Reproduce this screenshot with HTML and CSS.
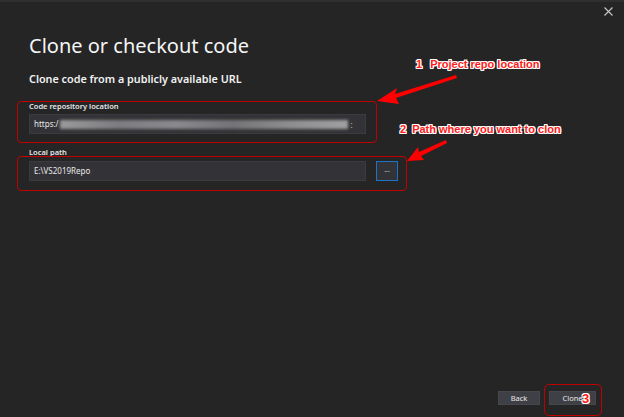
FILE: index.html
```html
<!DOCTYPE html>
<html>
<head>
<meta charset="utf-8">
<link rel="stylesheet" href="styles.css">
</head>
<body>
<div class="dialog">
  <div class="topbar">
    <svg class="close" width="9" height="9" viewBox="0 0 9 9"><path d="M0.5 0.5L8.5 8.5M8.5 0.5L0.5 8.5" stroke="#c8c8c8" stroke-width="1.1"/></svg>
  </div>
  <main class="content">
    <h1 class="title">Clone or checkout code</h1>
    <h2 class="subtitle">Clone code from a publicly available URL</h2>
    <div class="field field-repo">
      <label class="label">Code repository location</label>
      <div class="input"><span class="value">https:/</span><span class="blur"></span><span class="blur-tail">:</span></div>
    </div>
    <div class="field field-path">
      <label class="label">Local path</label>
      <div class="row">
        <div class="input"><span class="value">E:\VS2019Repo</span></div>
        <button class="browse">...</button>
      </div>
    </div>
  </main>
  <footer class="footer">
    <button class="btn">Back</button>
    <button class="btn">Clone</button>
  </footer>

  <div class="annot box1"></div>
  <div class="annot box2"></div>
  <div class="annot box3"></div>
  <svg class="arrows" width="624" height="417" viewBox="0 0 624 417">
    <polygon points="377,101 397,88 395,94 456,75 457,78 396,98 399,104" fill="#ff0000"/>
    <polygon points="407,161 418,147 419,152 446,140 447,143 421,156 424,160" fill="#ff0000"/>
  </svg>
  <div class="note note1"><span class="num">1</span>Project repo location</div>
  <div class="note note2"><span class="num">2</span>Path where you want to clon</div>
  <div class="note note3">3</div>
</div>
</body>
</html>
```
FILE: styles.css
```css
* { box-sizing: border-box; }
html, body { margin: 0; padding: 0; }
body {
  width: 624px;
  height: 417px;
  background: #252526;
  font-family: "Noto Sans", "Open Sans", sans-serif;
  color: #f1f1f1;
  overflow: hidden;
}
.dialog {
  position: relative;
  width: 624px;
  height: 417px;
  border-top: 2px solid #2f2f31;
  display: flex;
  flex-direction: column;
}
.topbar {
  height: 20px;
  display: flex;
  justify-content: flex-end;
  align-items: flex-start;
  padding: 5px 11px 0 0;
}
.close { display: block; }
.content {
  flex: 1;
  padding: 11px 0 0 29px;
  display: flex;
  flex-direction: column;
}
.title {
  margin: 0;
  font-size: 20px;
  font-weight: 400;
  line-height: 26px;
  color: #f5f5f5;
}
.subtitle {
  margin: 12px 0 0;
  font-size: 10.8px;
  font-weight: 600;
  line-height: 16px;
  color: #f1f1f1;
}
.field { display: flex; flex-direction: column; }
.field-repo { margin-top: 14px; }
.field-path { margin-top: 13px; }
.label {
  font-size: 7.5px;
  font-weight: 600;
  line-height: 10px;
  color: #e6e6e6;
  margin-bottom: 3px;
}
.field-path .label { margin-bottom: 4px; }
.row { display: flex; gap: 10px; }
.input {
  width: 337px;
  height: 20px;
  background: #333337;
  border: 1px solid #3a3a3f;
  display: flex;
  align-items: center;
  padding-left: 4px;
  font-size: 8px;
  color: #e8e8e8;
  position: relative;
}
.value { line-height: 10px; }
.blur {
  width: 288px;
  height: 9px;
  margin-left: 1px;
  background: linear-gradient(90deg, #9a9a9c 0%, #7d7d80 20%, #8a8a8d 40%, #747477 60%, #8e8e90 80%, #a0a0a2 100%);
  filter: blur(1.6px);
}
.blur-tail { margin-left: 3px; font-size: 8px; color: #d8c7a0; }
.browse {
  width: 22px;
  height: 20px;
  background: #333337;
  border: 1px solid #1f73c4;
  color: #d0d0d0;
  font-size: 7px;
  font-family: "Noto Sans", sans-serif;
  padding: 0 0 3px;
  line-height: 10px;
}
.footer {
  display: flex;
  justify-content: flex-end;
  gap: 9px;
  padding: 0 28px 12px 0;
}
.btn {
  width: 42px;
  height: 14px;
  padding: 0;
  background: #3f3f46;
  border: 1px solid #46464d;
  color: #e8e8e8;
  font-family: "Noto Sans", sans-serif;
  font-size: 7.5px;
  line-height: 12px;
}
.btn + .btn { width: 47px; }

.annot {
  position: absolute;
  border: 1.6px solid #c00000;
  border-radius: 4px;
}
.box1 { left: 17px; top: 99px; width: 360px; height: 42px; }
.box2 { left: 17px; top: 154px; width: 390px; height: 35px; }
.box3 { left: 544px; top: 382px; width: 58px; height: 32px; border-radius: 5px; }
.arrows { position: absolute; left: 0; top: -2px; }
.note {
  position: absolute;
  font-family: "Liberation Sans", Arial, sans-serif;
  font-weight: 700;
  font-size: 11px;
  line-height: 13px;
  color: #ff1a1a;
  text-shadow: 1px 0 0 #fff, -1px 0 0 #fff, 0 1px 0 #fff, 0 -1px 0 #fff, 1px 1px 0 #fff, -1px -1px 0 #fff, 1px -1px 0 #fff, -1px 1px 0 #fff;
  white-space: nowrap;
}
.note .num { margin-right: 8px; }
.note1 { left: 416px; top: 56px; }
.note2 { left: 400px; top: 121px; }
.note2 .num { margin-right: 6px; }
.note3 { left: 582px; top: 390px; font-size: 13px; }
```
